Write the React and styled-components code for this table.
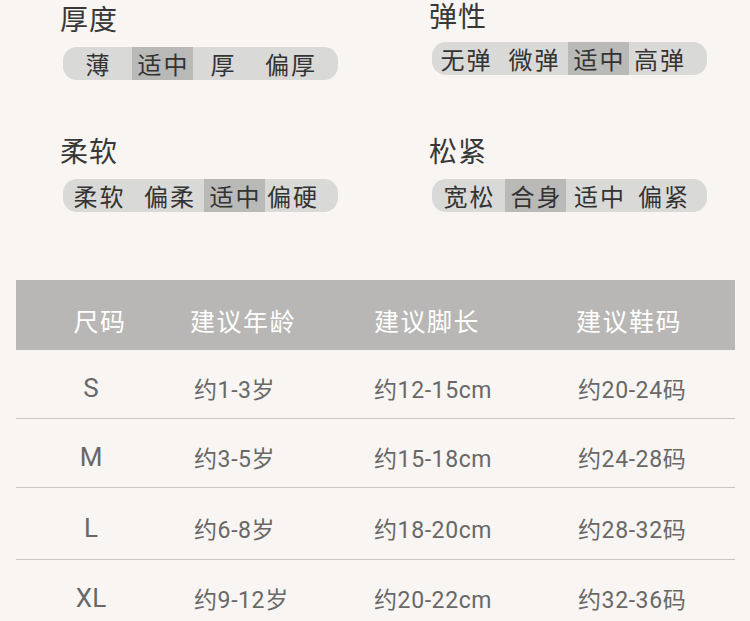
import React from 'react'
import styled, { createGlobalStyle } from 'styled-components'

const GlobalStyle = createGlobalStyle`
  html, body {
    margin: 0;
    padding: 0;
    background: #f8f5f2;
  }
  body {
    font-family: Roboto, "Noto Sans CJK SC", sans-serif;
  }
`;

const attrs = [
  {
    label: '厚度',
    tight: false,
    padRight: 10,
    options: [
      { t: '薄', w: 69 },
      { t: '适中', w: 61, on: true },
      { t: '厚', w: 59 },
      { t: '偏厚', w: 76 },
    ],
  },
  {
    label: '弹性',
    tight: true,
    padRight: 18,
    options: [
      { t: '无弹', w: 67 },
      { t: '微弹', w: 69 },
      { t: '适中', w: 61, on: true },
      { t: '高弹', w: 60 },
    ],
  },
  {
    label: '柔软',
    tight: false,
    padRight: 20,
    options: [
      { t: '柔软', w: 71 },
      { t: '偏柔', w: 70 },
      { t: '适中', w: 61, on: true },
      { t: '偏硬', w: 53 },
    ],
  },
  {
    label: '松紧',
    tight: false,
    padRight: 13,
    options: [
      { t: '宽松', w: 73 },
      { t: '合身', w: 61, on: true },
      { t: '适中', w: 66 },
      { t: '偏紧', w: 62 },
    ],
  },
];

const sizes = [
  ['S', '约1-3岁', '约12-15cm', '约20-24码'],
  ['M', '约3-5岁', '约15-18cm', '约24-28码'],
  ['L', '约6-8岁', '约18-20cm', '约28-32码'],
  ['XL', '约9-12岁', '约20-22cm', '约32-36码'],
];

const heads = ['尺码', '建议年龄', '建议脚长', '建议鞋码'];

function App() {
  return (
    <Page>
      <GlobalStyle />
      <AttrGrid>
        {attrs.map((a) => (
          <div key={a.label}>
            <AttrLabel $tight={a.tight}>{a.label}</AttrLabel>
            <Pill $padRight={a.padRight} $tight={a.tight}>
              {a.options.map((o) => (
                <Option key={o.t} $w={o.w} $on={o.on}>
                  {o.t}
                </Option>
              ))}
            </Pill>
          </div>
        ))}
      </AttrGrid>

      <Table>
        <HeadRow>
          {heads.map((h, i) => (
            <HeadCell key={h} $col={i}>
              {h}
            </HeadCell>
          ))}
        </HeadRow>
        {sizes.map((row, r) => (
          <BodyRow key={row[0]} $last={r === sizes.length - 1} $tall={r === 2}>
            {row.map((c, i) => (
              <BodyCell key={i} $col={i}>
                {c}
              </BodyCell>
            ))}
          </BodyRow>
        ))}
      </Table>
    </Page>
  )
}

export default App

const Page = styled.div`
  width: 750px;
  height: 621px;
  overflow: hidden;
  background: #f8f5f2;
`;

const AttrGrid = styled.div`
  display: grid;
  grid-template-columns: 369px 1fr;
  row-gap: 53px;
  padding-top: 1px;
  padding-left: 60px;
`;

const AttrLabel = styled.div`
  font-family: "Noto Sans CJK SC", sans-serif;
  font-size: 28px;
  line-height: ${(p) => (p.$tight ? 28 : 34)}px;
  color: #383838;
  letter-spacing: 1px;
  white-space: nowrap;
`;

const Pill = styled.div`
  display: flex;
  width: 275px;
  height: 33px;
  margin-top: ${(p) => (p.$tight ? 13 : 12)}px;
  margin-left: 3px;
  padding-right: ${(p) => p.$padRight}px;
  box-sizing: border-box;
  border-radius: 14px;
  overflow: hidden;
  background: #d9d9d7;
`;

const Option = styled.span`
  flex: none;
  width: ${(p) => p.$w}px;
  height: 33px;
  line-height: 33px;
  text-align: center;
  white-space: nowrap;
  font-family: "Noto Sans CJK SC", sans-serif;
  font-size: 24px;
  letter-spacing: 2px;
  text-indent: 2px;
  color: #333;
  background: ${(p) => (p.$on ? '#b9b9b7' : 'transparent')};
`;

const Table = styled.div`
  margin: 68px 15px 0 16px;
`;

const cols = '150px 208px 202px 1fr';
const pads = [0, 24, 0, 0];

const HeadRow = styled.div`
  display: grid;
  grid-template-columns: ${cols};
  height: 70px;
  align-items: center;
  background: #b8b7b5;
`;

const HeadCell = styled.div`
  padding-top: 10px;
  padding-left: ${(p) => (p.$col === 0 ? 18 : pads[p.$col])}px;
  text-align: ${(p) => (p.$col === 0 ? 'center' : 'left')};
  font-family: "Noto Sans CJK SC", sans-serif;
  font-size: 25px;
  letter-spacing: 1.5px;
  color: #fff;
`;

const BodyRow = styled.div`
  display: grid;
  grid-template-columns: ${cols};
  height: ${(p) => (p.$tall ? 71 : 68)}px;
  align-items: center;
  border-bottom: ${(p) => (p.$last ? 'none' : '1px solid #c6c6c4')};
`;

const BodyCell = styled.div`
  padding-top: 8px;
  padding-left: ${(p) => (p.$col === 1 ? 28 : p.$col === 3 ? 2 : 0)}px;
  text-align: ${(p) => (p.$col === 0 ? 'center' : 'left')};
  font-family: Roboto, "Noto Sans CJK SC", sans-serif;
  font-size: ${(p) => (p.$col === 0 ? 26 : 23)}px;
  letter-spacing: ${(p) => (p.$col === 0 ? 0 : 0.6)}px;
  color: #686868;
`;
